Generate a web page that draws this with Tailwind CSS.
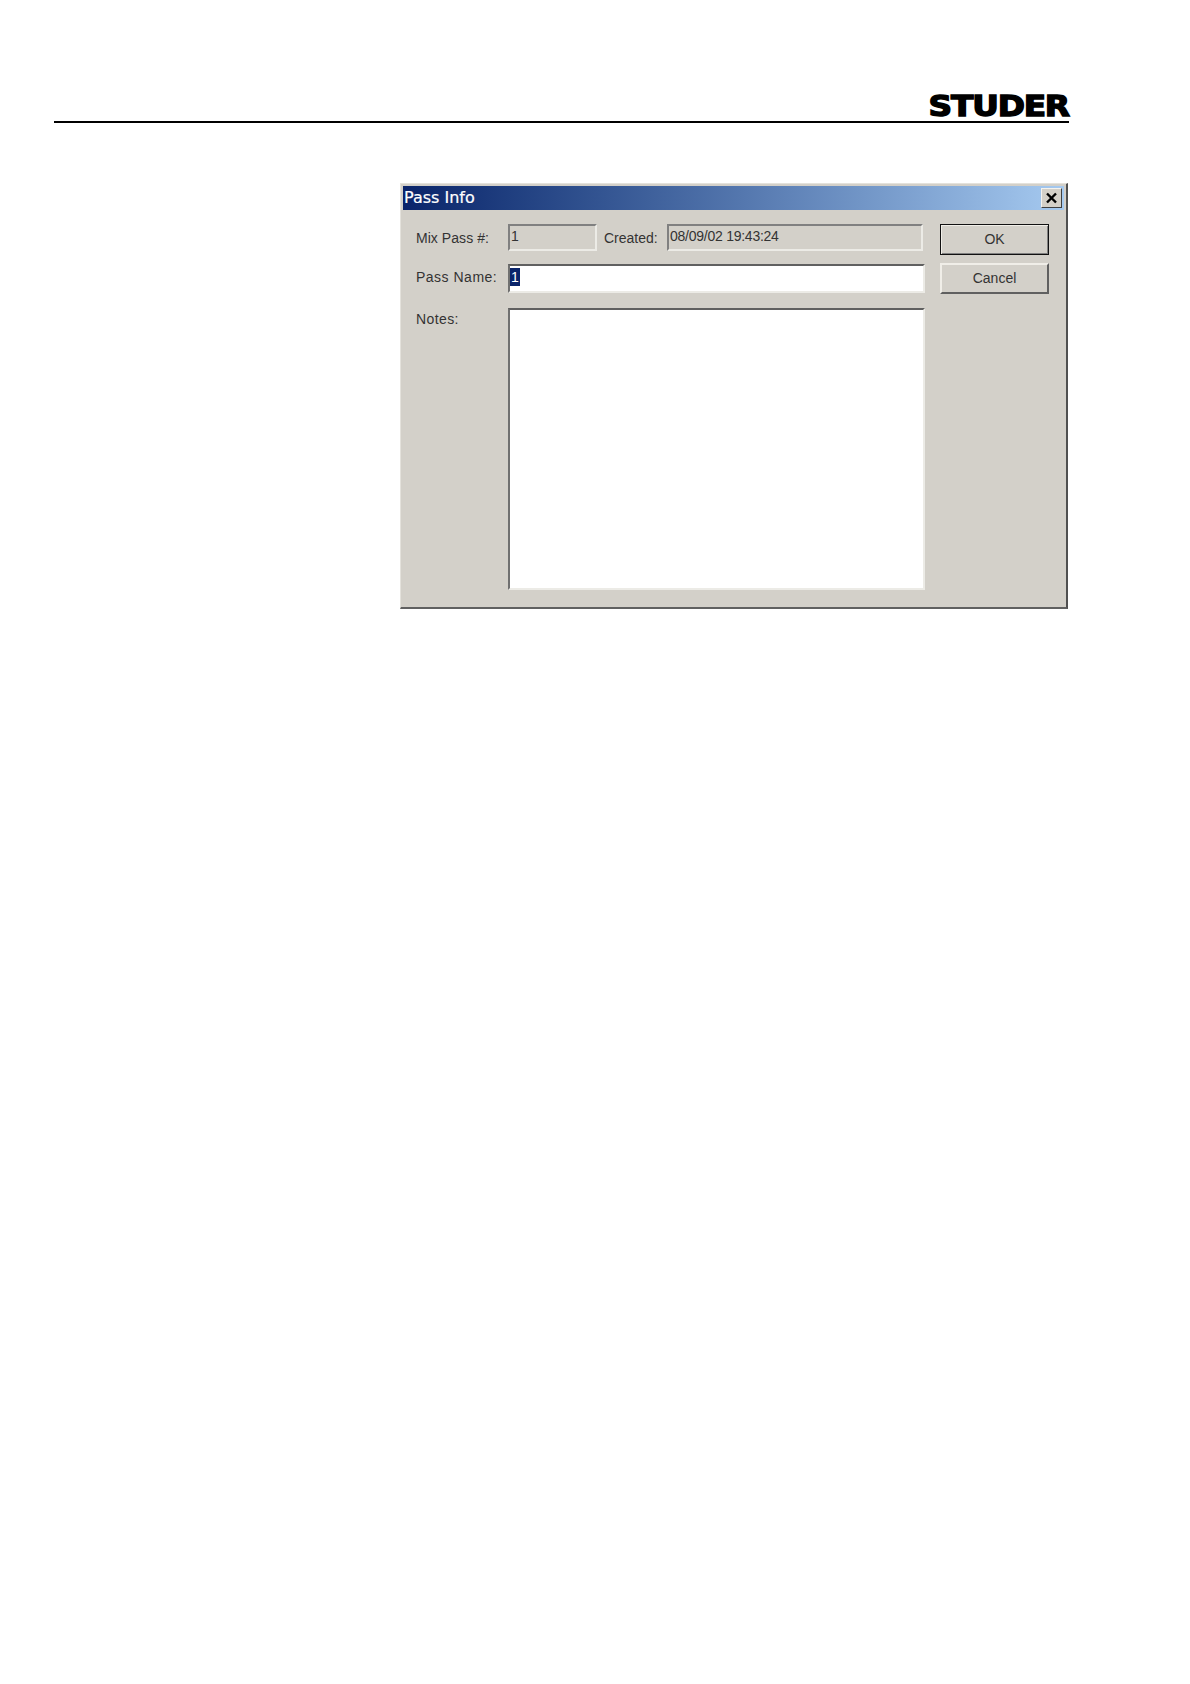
<!DOCTYPE html>
<html lang="en">
<head>
  <meta charset="UTF-8" />
  <title>Pass Info</title>
  <script src="https://cdn.jsdelivr.net/npm/@tailwindcss/browser@4"></script>
</head>
<body class="bg-white font-['Liberation_Sans',sans-serif] text-[14px] text-[#333]">
  <div class="pt-[96px] pl-[54px] pr-[121px]">
    <!-- page header -->
    <header class="flex justify-end h-[27px] border-b-2 border-black">
      <span class="font-['DejaVu_Sans',sans-serif] font-bold text-[28px] leading-[21px] tracking-[-1px] text-black [-webkit-text-stroke:1.4px_black] origin-right scale-x-[1.17]">STUDER</span>
    </header>
  </div>

  <!-- dialog -->
  <div class="ml-[400px] mt-[60px] w-[668px] h-[426px] bg-[#d3d0c9] border border-[#e4e2dc] border-r-2 border-b-2 border-r-[#505050] border-b-[#606060] p-[2px]">
    <div class="flex items-center justify-between h-[24px] pl-[1px] pr-[2px] bg-gradient-to-r from-[#0a246a] to-[#a6caf0]">
      <span class="font-['DejaVu_Sans',sans-serif] text-[16px] text-white [-webkit-text-stroke:0.2px_white]">Pass Info</span>
      <span class="flex items-center justify-center w-[21px] h-[20px] bg-[#d4d0c8] border border-[#f4f2ee] border-r-[#404040] border-b-[#404040]">
        <svg width="13" height="12" viewBox="0 0 13 12"><path d="M2 1.5 L11 10.5 M11 1.5 L2 10.5" stroke="#000" stroke-width="2.4" fill="none"/></svg>
      </span>
    </div>

    <div class="flex pt-[14px] pl-[13px]">
      <div class="w-[509px] flex flex-col">
        <div class="flex h-[27px] items-stretch">
          <label class="w-[92px] pt-[4px] tracking-[0.05px]">Mix Pass #:</label>
          <div class="w-[89px] pl-[1px] border-2 border-t-[#808080] border-l-[#808080] border-r-[#ecebe6] border-b-[#ecebe6]">1</div>
          <label class="w-[70px] pl-[7px] pt-[4px]">Created:</label>
          <div class="w-[256px] pl-[1px] tracking-[-0.25px] border-2 border-t-[#808080] border-l-[#808080] border-r-[#ecebe6] border-b-[#ecebe6]">08/09/02 19:43:24</div>
        </div>
        <div class="flex mt-[13px] h-[29px]">
          <label class="w-[92px] pt-[3px] tracking-[0.5px]">Pass Name:</label>
          <div class="w-[417px] bg-white pt-[1px] border-2 border-t-[#606060] border-l-[#707070] border-r-[#ecebe6] border-b-[#ecebe6]">
            <span class="inline-block bg-[#0a246a] text-white px-[1px] h-[18px] leading-[18px]">1</span>
          </div>
        </div>
        <div class="flex mt-[15px] h-[282px]">
          <label class="w-[92px] pt-[1px] tracking-[0.4px]">Notes:</label>
          <div class="w-[417px] bg-white border-2 border-t-[#606060] border-l-[#707070] border-r-[#ecebe6] border-b-[#ecebe6]"></div>
        </div>
      </div>

      <div class="w-[109px] ml-[15px] flex flex-col gap-[8px]">
        <button class="h-[31px] bg-[#d3d0c9] border border-[#111] shadow-[inset_1px_1px_0_#f0eee8,inset_-1px_-1px_0_#808080]">OK</button>
        <button class="h-[31px] bg-[#d3d0c9] border-2 border-t-[#f0eee8] border-l-[#f0eee8] border-r-[#606060] border-b-[#606060]">Cancel</button>
      </div>
    </div>
  </div>
</body>
</html>
